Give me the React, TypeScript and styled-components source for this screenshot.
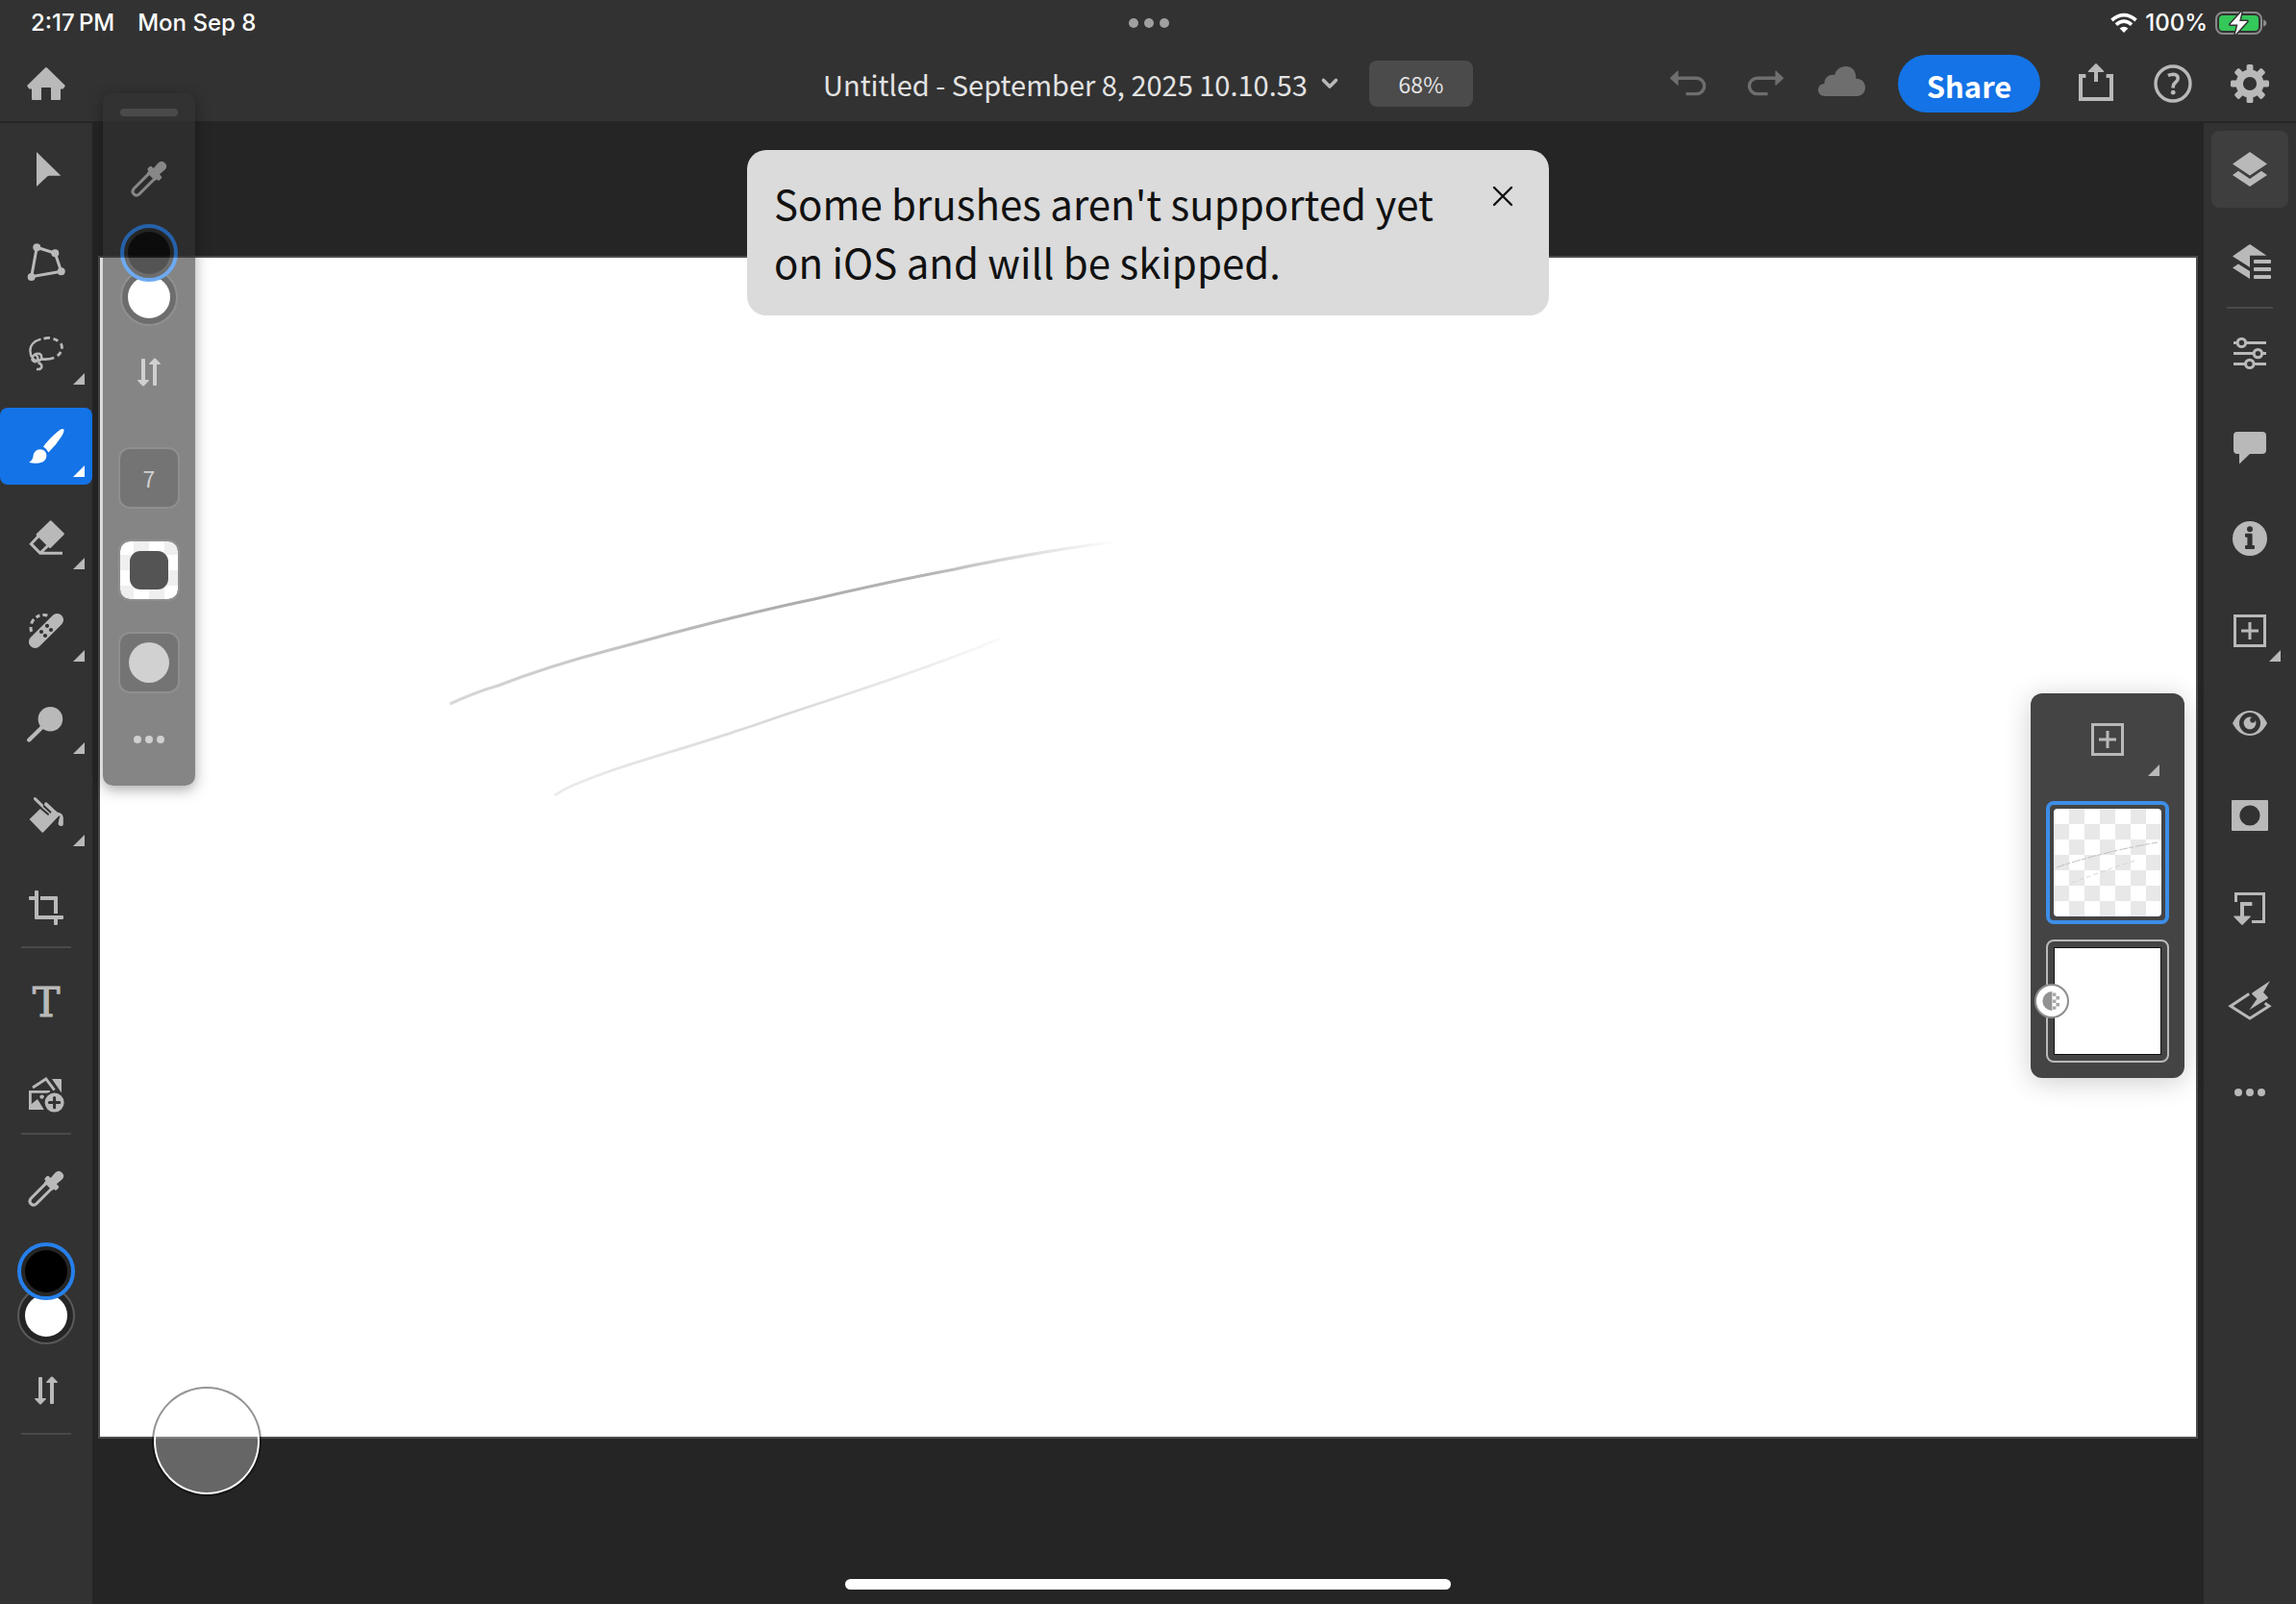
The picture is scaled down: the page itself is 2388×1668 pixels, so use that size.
import React from "react";
import styled, { createGlobalStyle, css } from "styled-components";

const color = {
  bar: "#323232",
  stage: "#252525",
  edge: "#4b4b4b",
  icon: "#b9b9b9",
  dim: "#6e6e6e",
  text: "#e3e3e3",
  accent: "#1473e6",
  ring: "#2680eb",
};

const uiFont = `"Noto Sans CJK JP", "Noto Sans CJK SC", "Open Sans", sans-serif`;
const systemFont = `Inter, Roboto, sans-serif`;

const GlobalStyle = createGlobalStyle`
  *, *::before, *::after { box-sizing: border-box; }
  body { margin: 0; background: ${color.stage}; font-family: ${uiFont}; }
  button { appearance: none; border: 0; margin: 0; padding: 0; background: none; color: inherit; font: inherit; cursor: pointer; }
`;

/* ---------- page frame ---------- */

const Page = styled.div`
  position: relative;
  display: flex;
  flex-direction: column;
  min-height: 100vh;
  overflow: hidden;
  background: ${color.stage};
`;

const StatusBar = styled.div`
  display: grid;
  grid-template-columns: 1fr auto 1fr;
  align-items: center;
  height: 48px;
  padding: 0 30px 0 32px;
  background: ${color.bar};
  color: #fff;
  font-family: ${systemFont};
  font-size: 24px;
  font-weight: 500;
  line-height: 32px;
`;

const StatusLeft = styled.div`
  display: flex;
  gap: 24px;
`;

const StatusRight = styled.div`
  display: flex;
  align-items: center;
  justify-content: flex-end;
  gap: 8px;
`;

const Dots = styled.span<{ $size: number; $gap: number; $tone?: string }>`
  display: flex;
  justify-content: center;
  gap: ${(p) => p.$gap}px;
  i {
    width: ${(p) => p.$size}px;
    height: ${(p) => p.$size}px;
    border-radius: 50%;
    background: ${(p) => p.$tone ?? color.icon};
  }
`;

const Header = styled.header`
  display: grid;
  grid-template-columns: 1fr auto 1fr;
  align-items: center;
  height: 80px;
  padding: 0 8px;
  border-bottom: 2px solid ${color.stage};
  background: ${color.bar};
`;

const HeaderCenter = styled.div`
  display: flex;
  align-items: center;
  gap: 32px;
`;

const HeaderActions = styled.div`
  display: flex;
  align-items: center;
  justify-content: flex-end;
`;

const HeaderButton = styled.button<{ $dim?: boolean }>`
  display: flex;
  align-items: center;
  justify-content: center;
  width: 80px;
  height: 64px;
  color: ${(p) => (p.$dim ? color.dim : color.icon)};
`;

const TitleButton = styled.button`
  display: flex;
  align-items: center;
  gap: 14px;
  color: ${color.text};
  font-size: 29px;
  line-height: 48px;
  white-space: nowrap;
`;

const ZoomButton = styled.button`
  width: 108px;
  height: 48px;
  border-radius: 8px;
  background: ${color.edge};
  color: ${color.text};
  font-size: 23px;
  line-height: 48px;
`;

const ShareButton = styled.button`
  width: 148px;
  height: 60px;
  margin: 0 18px;
  border-radius: 30px;
  background: ${color.accent};
  color: #fff;
  font-size: 31px;
  font-weight: 700;
  line-height: 64px;
`;

const Workspace = styled.div`
  display: flex;
  flex: 1;
`;

/* ---------- side toolbars ---------- */

const LeftBar = styled.nav`
  display: flex;
  flex: none;
  flex-direction: column;
  align-items: center;
  width: 96px;
  padding-top: 8px;
  background: ${color.bar};
`;

const RightBar = styled(LeftBar)``;

const ToolGroup = styled.div`
  display: flex;
  flex-direction: column;
  align-items: center;
  gap: 16px;
  width: 100%;
`;

const Rule = styled.hr<{ $width: number; $above?: number; $below?: number }>`
  width: ${(p) => p.$width}px;
  height: 2px;
  margin: ${(p) => p.$above ?? 0}px 0 ${(p) => p.$below ?? 0}px;
  border: 0;
  background: #4a4a4a;
`;

const cornerMark = css`
  &::after {
    content: "";
    position: absolute;
    right: 8px;
    bottom: 8px;
    width: 12px;
    height: 12px;
    background: currentColor;
    clip-path: polygon(100% 0, 100% 100%, 0 100%);
  }
`;

const ToolButton = styled.button<{ $active?: boolean; $more?: boolean }>`
  position: relative;
  display: flex;
  align-items: center;
  justify-content: center;
  width: 100%;
  height: 80px;
  border-radius: 8px;
  color: ${(p) => (p.$active ? "#fff" : color.icon)};
  background: ${(p) => (p.$active ? color.accent : "transparent")};
  ${(p) => p.$more && cornerMark}
`;

const PanelButton = styled(ToolButton)`
  width: 80px;
  color: ${color.icon};
  background: ${(p) => (p.$active ? "#3e3e3e" : "transparent")};
`;

const TypeGlyph = styled.span`
  font-family: "DejaVu Serif", serif;
  font-size: 43px;
  line-height: 80px;
  -webkit-text-stroke: 1px currentColor;
`;

const Swatches = styled.div`
  display: flex;
  flex-direction: column;
  align-items: center;
`;

const Swatch = styled.button<{ $fill: string; $active?: boolean }>`
  position: relative;
  z-index: ${(p) => (p.$active ? 1 : 0)};
  width: 60px;
  height: 60px;
  margin-bottom: ${(p) => (p.$active ? -14 : 0)}px;
  padding: ${(p) => (p.$active ? 4 : 6)}px;
  border: ${(p) => (p.$active ? `4px solid ${color.ring}` : "2px solid #5a5a5a")};
  border-radius: 50%;
  background: ${color.stage};
  &::before {
    content: "";
    display: block;
    height: 100%;
    border-radius: 50%;
    background: ${(p) => p.$fill};
  }
`;

const Space = styled.div<{ $h: number }>`
  flex: none;
  height: ${(p) => p.$h}px;
`;

/* ---------- canvas ---------- */

const Stage = styled.main`
  display: flex;
  flex: 1;
  min-width: 0;
  padding: 138px 6px 172px;
`;

const Canvas = styled.div`
  flex: 1;
  border: 2px solid ${color.edge};
  background: #fff;
  svg {
    display: block;
    width: 100%;
    height: 100%;
  }
`;

const Toast = styled.div`
  position: absolute;
  top: 156px;
  left: 50%;
  display: flex;
  align-items: flex-start;
  justify-content: space-between;
  width: 834px;
  padding: 16px 16px 16px 28px;
  border-radius: 20px;
  background: #dbdbdb;
  transform: translateX(-50%);
`;

const ToastText = styled.p`
  margin: 8px 0 10px;
  color: #111;
  font-size: 42px;
  line-height: 61px;
`;

const CloseButton = styled.button`
  display: flex;
  flex: none;
  align-items: center;
  justify-content: center;
  width: 64px;
  height: 64px;
  color: #111;
`;

const TouchControl = styled.button`
  position: absolute;
  left: 158px;
  bottom: 112px;
  width: 114px;
  height: 114px;
  border: 2px solid rgba(0, 0, 0, 0.42);
  border-radius: 50%;
  background: rgba(255, 255, 255, 0.3);
  background-clip: padding-box;
  box-shadow: inset 0 0 0 2px #fff;
`;

const HomeIndicator = styled.div`
  position: absolute;
  bottom: 15px;
  left: 50%;
  width: 630px;
  height: 11px;
  border-radius: 6px;
  background: #fff;
  transform: translateX(-50%);
`;

/* ---------- floating brush options ---------- */

const BrushPanel = styled.aside`
  position: absolute;
  top: 97px;
  left: 107px;
  display: flex;
  flex-direction: column;
  align-items: center;
  width: 96px;
  padding: 16px 0 8px;
  border-radius: 10px;
  background: rgba(50, 50, 50, 0.89);
  box-shadow: 0 4px 14px rgba(0, 0, 0, 0.5);
  color: ${color.icon};
  opacity: 0.667;
`;

const Grip = styled.div`
  width: 60px;
  height: 8px;
  border-radius: 4px;
  background: #575757;
`;

const Options = styled.div`
  display: flex;
  flex-direction: column;
  gap: 32px;
`;

const OptionButton = styled.button<{ $checker?: boolean }>`
  display: flex;
  align-items: center;
  justify-content: center;
  width: 64px;
  height: 64px;
  border: 2px solid #585858;
  border-radius: 12px;
  background: ${(p) =>
    p.$checker
      ? "repeating-conic-gradient(#e8e8e8 0 25%, #fff 0 50%) 14px 14px / 32px 32px padding-box"
      : "#303030"};
  color: ${color.icon};
  font-size: 23px;
  line-height: 60px;
`;

const OpacityChip = styled.span`
  width: 40px;
  height: 40px;
  border-radius: 11px;
  background: #000;
`;

const HardnessChip = styled.span`
  width: 42px;
  height: 42px;
  border-radius: 50%;
  background: #bbb;
`;

/* ---------- floating layer strip ---------- */

const LayerPanel = styled.aside`
  position: absolute;
  top: 721px;
  right: 116px;
  display: flex;
  flex-direction: column;
  align-items: center;
  gap: 16px;
  width: 160px;
  padding-bottom: 16px;
  border-radius: 12px;
  background: #444;
  box-shadow: 0 4px 28px rgba(0, 0, 0, 0.2);
`;

const AddLayer = styled(ToolButton)`
  width: 128px;
  height: 96px;
  &::after {
    right: 10px;
    bottom: 10px;
  }
`;

const LayerThumb = styled.button<{ $active?: boolean }>`
  position: relative;
  width: 128px;
  height: 128px;
  padding: ${(p) => (p.$active ? 4 : 6)}px;
  border: ${(p) => (p.$active ? "4px solid #3d8ee8" : `2px solid ${color.icon}`)};
  border-radius: 8px;
  svg {
    display: block;
  }
`;

const PaintedThumb = styled.div`
  height: 112px;
  border-radius: 4px;
  background: repeating-conic-gradient(#e8e8e8 0 25%, #fff 0 50%) 0 0 / 32px 32px;
`;

const WhiteThumb = styled.div`
  height: 112px;
  border: 1px solid #111;
  background: #fff;
`;

const BlendBadge = styled.span`
  position: absolute;
  top: 44px;
  left: -14px;
  display: flex;
  align-items: center;
  justify-content: center;
  width: 36px;
  height: 36px;
  border: 2px solid #8e8e8e;
  border-radius: 50%;
  background: #fff;
  color: #929292;
`;

/* ---------- icons ---------- */

const Glyph = styled.svg`
  display: block;
  flex: none;
  overflow: visible;
`;

function Icon({ children, size = 40 }: { children: React.ReactNode; size?: number }) {
  return (
    <Glyph width={size} height={size} viewBox={`0 0 ${size} ${size}`} fill="currentColor" aria-hidden="true">
      {children}
    </Glyph>
  );
}

const line = { fill: "none", stroke: "currentColor", strokeWidth: 3 } as const;

const HomeIcon = () => (
  <Icon>
    <path d="M19 3.6Q20 2.6 21 3.6L39.4 21.6Q40.3 22.8 38.8 24L37.5 25.6H35V36Q35 37 34 37H25V24.5Q25 24 24.5 24H15.5Q15 24 15 24.5V37H6Q5 37 5 36V25.6H2.5L1.2 24Q-.3 22.8 .6 21.6Z" />
  </Icon>
);
const MoveIcon = () => (
  <Icon>
    <path d="M10 2L35.3 26.7H23Q22 26.7 21.2 27.6L10 38Z" />
  </Icon>
);
const TransformIcon = () => (
  <Icon>
    <path {...line} d="M10.3 5.3L29.3 11.3L35.7 30.3L4.7 35.7Z" />
    <circle cx="10.3" cy="5.3" r="4" />
    <circle cx="29.3" cy="11.3" r="4" />
    <circle cx="35.7" cy="30.3" r="4" />
    <circle cx="4.7" cy="36" r="4" />
  </Icon>
);
const LassoIcon = () => (
  <Icon>
    <g {...line} strokeWidth={2.8}>
      <path d="M14.5 4.6C7 6.6 3.2 11.5 3.4 17C3.6 23.5 7.5 28 12 27.2C16.5 26.2 16.3 19.8 11.6 19.6C6.5 19.4 3.5 25.5 7 27.8C9.6 29.4 12.3 26 11.2 23.4C10.5 21.8 9.2 21.6 8.6 22.4" strokeWidth={2.4} />
      <path d="M11.5 29Q16.2 31 15.2 34Q14.2 36.4 10 36" strokeWidth={2.6} />
      <path d="M17.5 4.2Q20.5 3 24 3.4M27.5 4.4Q30.2 5 32.2 6.6M35.4 9.2Q36.8 12 36.3 14.8M35.2 18Q34 20.4 31.8 22M28.2 24Q22 26.4 15 25.4" />
    </g>
  </Icon>
);
const BrushIcon = () => (
  <Icon>
    <path d="M17 20.4Q23 12 32.4 4.4Q36.5 1 38.3 2.4Q39.4 3.6 36.4 9.2Q31 18 22.4 26.4Q20.5 22.5 17 20.4Z" />
    <path d="M13.8 23.2C17.6 23.2 20.4 26 20.4 29.6C20.4 34.6 16.5 37.8 10.6 37.8C6.8 37.8 3.6 37.4 2.2 36.4C5 35.3 6.2 33.5 6.6 30C7 26 10 23.2 13.8 23.2Z" />
  </Icon>
);
const EraserIcon = () => (
  <Icon>
    <path d="M24 1.6Q24.7 1 25.4 1.6L38.6 14.6Q39.2 15.3 38.6 16L24.8 29.8Q24 30.4 23.2 29.8L9.8 16.6Q9.2 15.8 9.8 15.2Z" />
    <path {...line} d="M12 17.4L4.4 25.6L13.8 35.2H37M13.8 35.2L21.6 27.6" />
  </Icon>
);
const HealIcon = () => (
  <Icon>
    <g transform="rotate(-45 20 20)">
      <rect x="-2.8" y="13.4" width="45.6" height="13.2" rx="6.6" />
    </g>
    <g fill="#323232">
      <circle cx="21" cy="14.8" r="2.1" />
      <circle cx="25" cy="19" r="2.1" />
      <circle cx="15" cy="21" r="2.1" />
      <circle cx="19" cy="25" r="2.1" />
    </g>
    <path {...line} d="M4.8 20.8Q3.8 18.4 4 16M4.6 12.6Q5.6 9.8 7.2 8M9.6 6Q11.4 4.6 13.4 4M16.4 3.5Q19 3.2 21.4 4" />
  </Icon>
);
const DodgeIcon = () => (
  <Icon>
    <circle cx="24.4" cy="15.8" r="12.8" />
    <path {...line} strokeWidth={4.2} strokeLinecap="round" d="M16 24L2.2 37.6" />
  </Icon>
);
const FillIcon = () => (
  <Icon>
    <path d="M2.6 24L14.4 12.4L20 6.4L31.6 16.6Q37 17.4 37.8 22V29.4Q37.6 31 35.4 31Q32.4 30.6 32.6 28Q33 24.6 34.6 20.6Q33 20.4 32 21.8L17 37.4Q16.3 38 15.6 37.4Z" />
    <path fill="none" stroke="#323232" strokeWidth="2" d="M13.4 11.4L22 18.8M16.6 9.2L24.4 16.6" strokeLinecap="round" />
    <path {...line} strokeLinecap="round" d="M8.4 2.6L15.6 9.6M19.8 7.8L26 13.6" />
  </Icon>
);
const CropIcon = () => (
  <Icon>
    <path d="M3 8H8V3Q8 2 9 2H11Q12 2 12 3V28H37Q38 28 38 29V31Q38 32 37 32H32V37Q32 38 31 38H29Q28 38 28 37V32H9Q8 32 8 31V12H3Q2 12 2 11V9Q2 8 3 8ZM14 8H31Q32 8 32 9V26H28V12H14Z" />
  </Icon>
);
const PlaceIcon = () => (
  <Icon>
    <path {...line} strokeWidth={2.8} d="M6 13L19.8 4L28.6 15.6" />
    <path d="M26 4H35Q36 4 36 5V18.4Z" />
    <path {...line} strokeWidth={2.8} d="M24 17.4H3.4V34.6H16" />
    <path d="M3.4 31L11 25L17.8 36H3.4Z" />
    <circle cx="15.6" cy="22.6" r="2.2" />
    <circle cx="28.6" cy="28.6" r="12" fill="#323232" />
    <circle cx="28.6" cy="28.6" r="10" />
    <path fill="none" stroke="#323232" strokeWidth="3" strokeLinecap="round" d="M28.6 23.4V33.8M23.4 28.6H33.8" />
  </Icon>
);
const DropperIcon = () => (
  <Icon>
    <g transform="rotate(45 20 20)">
      <path d="M15 2Q15 -3.4 20 -3.4Q25 -3.4 25 2L24.4 9H27Q28.6 9 28.6 10.6V13Q28.6 14.6 27 14.6H26V17H14V14.6H13Q11.4 14.6 11.4 13V10.6Q11.4 9 13 9H15.6Z" />
      <path {...line} d="M16 16V38.4Q16.4 42.4 20 42.4Q23.6 42.4 24 38.4V16" />
    </g>
  </Icon>
);
const SwapIcon = () => (
  <Icon>
    <path d="M12 7Q12 6 13 6H15Q16 6 16 7V28H19.4Q20.4 28.4 19.6 29.2L14.8 34.2Q14 35 13.2 34.2L8.4 29.2Q7.6 28.4 8.6 28H12Z" />
    <path d="M28 33Q28 34 27 34H25Q24 34 24 33V12H20.6Q19.6 11.6 20.4 10.8L25.2 5.8Q26 5 26.8 5.8L31.6 10.8Q32.4 11.6 31.4 12H28Z" />
  </Icon>
);

const LayersIcon = () => (
  <Icon>
    <path d="M20 1.9L38 14.4L20 26.4L2 14.4Z" />
    <path d="M2 26L8 21.8L20 29.9L32 21.8L38 26L20 38Z" />
  </Icon>
);
const LayerPropsIcon = () => (
  <Icon>
    <path d="M20 1.9L37.4 13.8H20V26L2 14.4Z" />
    <path d="M2 26.6L8 22.4L20 30V38Z" />
    <rect x="24" y="18" width="18" height="4" rx="1" />
    <rect x="24" y="26" width="18" height="4" rx="1" />
    <rect x="24" y="34" width="18" height="4" rx="1" />
  </Icon>
);
const SlidersIcon = () => (
  <Icon>
    <g {...line}>
      <path d="M3 8.4H7M16 8.4H37M3 19.6H24M33 19.6H37M3 30.4H15.4M24.4 30.4H37" />
      <circle cx="11.4" cy="8.4" r="4.2" />
      <circle cx="28.4" cy="19.6" r="4.2" />
      <circle cx="19.8" cy="30.4" r="4.2" />
    </g>
  </Icon>
);
const CommentIcon = () => (
  <Icon>
    <path d="M7 5H33Q37 5 37 9V24Q37 28 33 28H20L9.6 38Q9 38.4 9 37.6V28H7Q3 28 3 24V9Q3 5 7 5Z" />
  </Icon>
);
const InfoIcon = () => (
  <Icon>
    <circle cx="20" cy="20" r="18" />
    <g fill="#323232">
      <circle cx="20" cy="10.2" r="3" />
      <path d="M16 14.8H21.4Q22.6 14.8 22.6 16V27H24Q25 27 25 28V30Q25 31 24 31H16Q15 31 15 30V28Q15 27 16 27H17.4V18.8H16Q15 18.8 15 17.8V15.8Q15 14.8 16 14.8Z" />
    </g>
  </Icon>
);
const AddIcon = () => (
  <Icon>
    <rect {...line} x="4.5" y="4.5" width="31" height="31" />
    <path {...line} d="M20 11V29M11 20H29" />
  </Icon>
);
const EyeIcon = () => (
  <Icon>
    <path d="M20 7C28 7 34 12 38 20C34 28 28 33 20 33C12 33 6 28 2 20C6 12 12 7 20 7Z" />
    <circle cx="20" cy="20" r="11" fill="#323232" />
    <circle cx="20" cy="20" r="6.4" />
    <circle cx="23" cy="16.8" r="2.8" fill="#323232" />
  </Icon>
);
const MaskIcon = () => (
  <Icon>
    <path fillRule="evenodd" d="M2 4H38Q39 4 39 5V35Q39 36 38 36H2Q1 36 1 35V5Q1 4 2 4ZM20 9.4A10.6 10.6 0 1 0 20 30.6A10.6 10.6 0 1 0 20 9.4Z" />
  </Icon>
);
const ClipIcon = () => (
  <Icon>
    <path {...line} d="M5.5 14V5.5H34.5V34.5H22" />
    <path {...line} strokeWidth={4} d="M22.4 16H12V30" />
    <path d="M3.6 28.4H20.4Q21.4 28.6 20.6 29.4L12.8 37.6Q12 38.4 11.2 37.6L3.4 29.4Q2.6 28.6 3.6 28.4Z" />
  </Icon>
);
const LiveLayerIcon = () => (
  <Icon>
    <path {...line} d="M19.2 13.6L0 26.2L20 39L40 26.2L35.6 23.2" />
    <path d="M41 0L22.4 12.6Q21.8 13.4 22.4 14L27.4 18.8L19.4 30.2L38.4 18.6Q39.4 17.6 38.6 16.8L34 12Z" />
  </Icon>
);

const UndoIcon = () => (
  <Icon>
    <path {...line} strokeWidth={3.4} d="M9 14.2H28.4A8.2 8.2 0 0 1 28.4 30.6H17.5" />
    <path d="M9.6 7V21.4Q9.4 22.4 8.6 21.6L1.4 15Q.6 14.2 1.4 13.4L8.6 6.8Q9.4 6 9.6 7Z" />
  </Icon>
);
const RedoIcon = () => (
  <Icon>
    <g transform="translate(40 0) scale(-1 1)">
      <path {...line} strokeWidth={3.4} d="M9 14.2H28.4A8.2 8.2 0 0 1 28.4 30.6H17.5" />
      <path d="M9.6 7V21.4Q9.4 22.4 8.6 21.6L1.4 15Q.6 14.2 1.4 13.4L8.6 6.8Q9.4 6 9.6 7Z" />
    </g>
  </Icon>
);
const CloudIcon = () => (
  <Icon>
    <path d="M2.4 33C-2 33 -5 30.4 -5 26.6C-5 22.8 -2 20 1.6 20C1 14.6 6 9.6 12.2 11C13.4 5.6 18 2 23.6 2C30.4 2 35 7.4 34.2 14.8C39.6 14.4 44 18.4 44 24C44 29.4 40 33 35.4 33Z" />
  </Icon>
);
const ExportIcon = () => (
  <Icon>
    <path {...line} strokeWidth={4} d="M9.4 12H4V36H36V12H30.6M20 18V6" />
    <path d="M12.4 8H27.6Q28.6 7.6 28 6.8L20.8 -.6Q20 -1.4 19.2 -.6L12 6.8Q11.4 7.6 12.4 8Z" />
  </Icon>
);
const HelpIcon = () => (
  <Icon>
    <circle {...line} cx="20" cy="20" r="18" strokeWidth={3.4} />
    <path {...line} strokeWidth={3.6} d="M15 11.6Q17.4 10.2 20.4 10.2Q25.2 10.4 25.2 14.6Q25.2 16.8 22.4 19Q20.2 20.8 20.2 23V24.4" />
    <circle cx="20.2" cy="29.2" r="2.4" />
  </Icon>
);
const GearIcon = () => (
  <Icon>
    {[0, 45, 90, 135, 180, 225, 270, 315].map((a) => (
      <rect key={a} x="16.6" y="0" width="6.8" height="10" rx="1.6" transform={`rotate(${a} 20 20)`} />
    ))}
    <circle cx="20" cy="20" r="10.8" fill="none" stroke="currentColor" strokeWidth="7.4" />
  </Icon>
);
const CloseIcon = () => (
  <Icon size={20}>
    <path {...line} strokeWidth={2.4} strokeLinecap="round" d="M1 1L19 19M19 1L1 19" />
  </Icon>
);
const ChevronIcon = () => (
  <Glyph width="18" height="12" viewBox="0 0 18 12" aria-hidden="true">
    <path d="M2.5 2.5L9 9L15.5 2.5" fill="none" stroke={color.icon} strokeWidth="3.6" strokeLinecap="round" strokeLinejoin="round" />
  </Glyph>
);
const WifiIcon = () => (
  <Glyph width="28" height="20" viewBox="0 0 28 20" fill="none" stroke="#fff" strokeWidth="3.6" aria-hidden="true">
    <path d="M1.4 7Q14 -3.6 26.6 7" />
    <path d="M5.9 11.6Q14 4.6 22.1 11.6" />
    <path d="M14 20L9.6 15.6Q14 12 18.4 15.6Z" fill="#fff" stroke="none" />
  </Glyph>
);
const BatteryIcon = () => (
  <Glyph width="54" height="28" viewBox="0 0 54 28" aria-hidden="true">
    <rect x="1" y="3" width="47" height="22" rx="7" fill="none" stroke="#8a8a8a" strokeWidth="2" />
    <path d="M50 10.4Q53.4 11.4 53.4 14Q53.4 16.6 50 17.6Z" fill="#8a8a8a" />
    <rect x="4" y="6" width="41" height="16" rx="4" fill="#34c759" />
    <path d="M27.6 2L15.4 15.4H23.4L20.8 26L33.4 12H25.2Z" fill="#fff" stroke="#323232" strokeWidth="3" strokeLinejoin="round" paintOrder="stroke" />
  </Glyph>
);
const BlendIcon = () => (
  <Icon size={20}>
    <path d="M10.4 0V20A10 10 0 0 1 10.4 0Z" />
    <path opacity=".8" d="M11 1.6H14.4V5H11ZM14.4 5H18V8.4H14.4ZM11 8.4H14.4V12H11ZM14.4 12H18V15.4H14.4ZM11 15.4H14.4V18.8H11Z" />
  </Icon>
);

const EllipsisDots = ({ size, gap, tone }: { size: number; gap: number; tone?: string }) => (
  <Dots $size={size} $gap={gap} $tone={tone}>
    <i />
    <i />
    <i />
  </Dots>
);

const strokeLong =
  "M364 464C388 453 400 449 414 445C450 431 488 419 530 408C590 392 660 372 743 355C790 344 830 335 889 324C930 315 1000 302 1053 296";
const strokeShort = "M473 559Q482 553 491 549C510 541 530 534 530 534C570 520 640 501 704 478C770 456 870 424 936 396";

const Artwork = () => (
  <svg viewBox="0 0 2180 1226" preserveAspectRatio="xMinYMin meet" role="img" aria-label="Two pencil strokes">
    <defs>
      <linearGradient id="pencilLong" gradientUnits="userSpaceOnUse" x1="365" y1="0" x2="1053" y2="0">
        <stop offset="0" stopColor="#d8d8d8" />
        <stop offset=".2" stopColor="#c8c8c8" />
        <stop offset=".5" stopColor="#adadad" />
        <stop offset=".72" stopColor="#b4b4b4" />
        <stop offset=".86" stopColor="#dadada" />
        <stop offset="1" stopColor="#fcfcfc" />
      </linearGradient>
      <linearGradient id="pencilShort" gradientUnits="userSpaceOnUse" x1="474" y1="0" x2="936" y2="0">
        <stop offset="0" stopColor="#ebebeb" />
        <stop offset=".5" stopColor="#d8d8d8" />
        <stop offset=".8" stopColor="#eaeaea" />
        <stop offset="1" stopColor="#fafafa" />
      </linearGradient>
    </defs>
    <path d={strokeLong} fill="none" stroke="url(#pencilLong)" strokeWidth="3.2" />
    <path d={strokeShort} fill="none" stroke="url(#pencilShort)" strokeWidth="2.8" />
  </svg>
);

/* ---------- data ---------- */

type Tool = { name: string; icon: React.ReactNode; active?: boolean; more?: boolean };

const paintTools: Tool[] = [
  { name: "Move", icon: <MoveIcon /> },
  { name: "Transform", icon: <TransformIcon /> },
  { name: "Lasso", icon: <LassoIcon />, more: true },
  { name: "Brush", icon: <BrushIcon />, more: true, active: true },
  { name: "Eraser", icon: <EraserIcon />, more: true },
  { name: "Healing brush", icon: <HealIcon />, more: true },
  { name: "Dodge", icon: <DodgeIcon />, more: true },
  { name: "Fill", icon: <FillIcon />, more: true },
  { name: "Crop", icon: <CropIcon /> },
];

const insertTools: Tool[] = [
  { name: "Type", icon: <TypeGlyph>T</TypeGlyph> },
  { name: "Place photo", icon: <PlaceIcon /> },
];

const layerViews: Tool[] = [
  { name: "Layers", icon: <LayersIcon />, active: true },
  { name: "Layer properties", icon: <LayerPropsIcon /> },
];

const layerActions: Tool[] = [
  { name: "Adjustments", icon: <SlidersIcon /> },
  { name: "Comments", icon: <CommentIcon /> },
  { name: "Document info", icon: <InfoIcon /> },
  { name: "Add layer", icon: <AddIcon />, more: true },
  { name: "Layer visibility", icon: <EyeIcon /> },
  { name: "Add mask", icon: <MaskIcon /> },
  { name: "Clip layer", icon: <ClipIcon /> },
  { name: "Live effects", icon: <LiveLayerIcon /> },
  { name: "More layer actions", icon: <EllipsisDots size={8} gap={4} /> },
];

const renderTools = (tools: Tool[], Button: typeof ToolButton) => (
  <ToolGroup>
    {tools.map((t) => (
      <Button key={t.name} type="button" aria-label={t.name} $active={t.active} $more={t.more}>
        {t.icon}
      </Button>
    ))}
  </ToolGroup>
);

const ColorPair = () => (
  <Swatches>
    <Swatch type="button" aria-label="Foreground color" $fill="#000" $active />
    <Swatch type="button" aria-label="Background color" $fill="#fff" />
  </Swatches>
);

export default function App() {
  return (
    <Page>
      <GlobalStyle />
      <StatusBar>
        <StatusLeft>
          <span>2:17&#8201;PM</span>
          <span>Mon Sep 8</span>
        </StatusLeft>
        <EllipsisDots size={10} gap={6} tone="#a0a0a0" />
        <StatusRight>
          <WifiIcon />
          <span>100%</span>
          <BatteryIcon />
        </StatusRight>
      </StatusBar>

      <Header>
        <HeaderButton type="button" aria-label="Home">
          <HomeIcon />
        </HeaderButton>
        <HeaderCenter>
          <TitleButton type="button">
            Untitled - September 8, 2025 10.10.53
            <ChevronIcon />
          </TitleButton>
          <ZoomButton type="button">68%</ZoomButton>
        </HeaderCenter>
        <HeaderActions>
          <HeaderButton type="button" aria-label="Undo" $dim>
            <UndoIcon />
          </HeaderButton>
          <HeaderButton type="button" aria-label="Redo" $dim>
            <RedoIcon />
          </HeaderButton>
          <HeaderButton type="button" aria-label="Cloud status" $dim>
            <CloudIcon />
          </HeaderButton>
          <ShareButton type="button">Share</ShareButton>
          <HeaderButton type="button" aria-label="Export">
            <ExportIcon />
          </HeaderButton>
          <HeaderButton type="button" aria-label="Help">
            <HelpIcon />
          </HeaderButton>
          <HeaderButton type="button" aria-label="Settings">
            <GearIcon />
          </HeaderButton>
        </HeaderActions>
      </Header>

      <Workspace>
        <LeftBar aria-label="Tools">
          {renderTools(paintTools, ToolButton)}
          <Rule $width={52} $below={16} />
          {renderTools(insertTools, ToolButton)}
          <Rule $width={52} $below={16} />
          <ToolButton type="button" aria-label="Eyedropper">
            <DropperIcon />
          </ToolButton>
          <Space $h={16} />
          <ColorPair />
          <Space $h={8} />
          <ToolButton type="button" aria-label="Swap colors">
            <SwapIcon />
          </ToolButton>
          <Rule $width={52} $above={4} />
        </LeftBar>

        <Stage>
          <Canvas>
            <Artwork />
          </Canvas>
        </Stage>

        <RightBar aria-label="Layer tools">
          {renderTools(layerViews, PanelButton as typeof ToolButton)}
          <Rule $width={48} $above={7} $below={7} />
          {renderTools(layerActions, PanelButton as typeof ToolButton)}
        </RightBar>
      </Workspace>

      <Toast role="status">
        <ToastText>Some brushes aren't supported yet on iOS and will be skipped.</ToastText>
        <CloseButton type="button" aria-label="Dismiss">
          <CloseIcon />
        </CloseButton>
      </Toast>

      <BrushPanel aria-label="Brush options">
        <Grip />
        <Space $h={25} />
        <ToolButton type="button" aria-label="Pick color">
          <DropperIcon />
        </ToolButton>
        <Space $h={7} />
        <ColorPair />
        <Space $h={8} />
        <ToolButton type="button" aria-label="Swap brush colors">
          <SwapIcon />
        </ToolButton>
        <Space $h={38} />
        <Options>
          <OptionButton type="button">7</OptionButton>
          <OptionButton type="button" aria-label="Opacity" $checker>
            <OpacityChip />
          </OptionButton>
          <OptionButton type="button" aria-label="Hardness">
            <HardnessChip />
          </OptionButton>
        </Options>
        <Space $h={8} />
        <ToolButton type="button" aria-label="More brush options">
          <EllipsisDots size={8} gap={4} />
        </ToolButton>
      </BrushPanel>

      <LayerPanel aria-label="Layers">
        <AddLayer type="button" aria-label="New layer" $more>
          <AddIcon />
        </AddLayer>
        <LayerThumb type="button" aria-label="Layer 1" $active>
          <PaintedThumb>
            <svg width="112" height="112" viewBox="0 0 112 112" fill="none" aria-hidden="true">
              <path d="M3 61Q50 45 108 35" stroke="#c0c0c0" strokeWidth="1" strokeDasharray="9 1 5 2" />
              <path d="M19 77Q45 67 84 54" stroke="#d6d6d6" strokeWidth="1" strokeDasharray="5 3" />
            </svg>
          </PaintedThumb>
        </LayerThumb>
        <LayerThumb type="button" aria-label="Background layer">
          <WhiteThumb />
          <BlendBadge>
            <BlendIcon />
          </BlendBadge>
        </LayerThumb>
      </LayerPanel>

      <TouchControl type="button" aria-label="Touch shortcut" />
      <HomeIndicator />
    </Page>
  );
}
